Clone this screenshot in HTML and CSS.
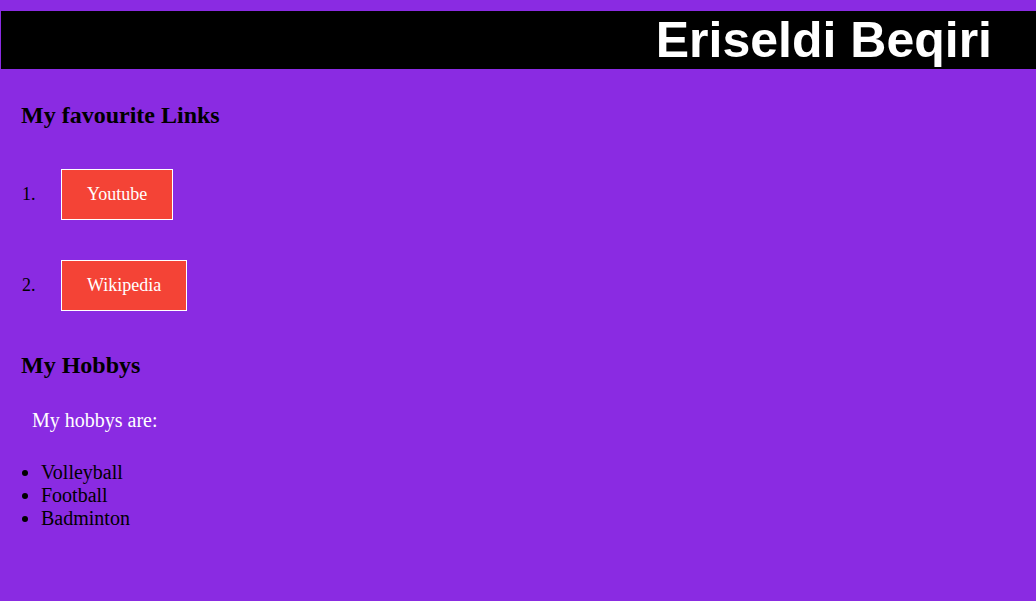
FILE: index.html
```html
<!DOCTYPE html>
<html lang="en">
<head>
<meta charset="utf-8">
<title>Eriseldi Beqiri</title>
<link rel="stylesheet" href="styles.css">
</head>
<body>
  <header class="banner">
    <h1 class="banner-title">Eriseldi Beqiri</h1>
  </header>
  <main class="content">
    <h2 class="section-title">My favourite Links</h2>
    <ol class="link-list">
      <li class="link-item"><a class="link-button" href="#">Youtube</a></li>
      <li class="link-item"><a class="link-button" href="#">Wikipedia</a></li>
    </ol>
    <h2 class="section-title">My Hobbys</h2>
    <p class="hobby-intro">My hobbys are:</p>
    <ul class="hobby-list">
      <li>Volleyball</li>
      <li>Football</li>
      <li>Badminton</li>
    </ul>
  </main>
</body>
</html>
```

FILE: styles.css
```css
html, body {
  margin: 0;
  padding: 0;
}

body {
  background: #8a2be2;
  font-family: "Liberation Serif", "Times New Roman", serif;
  color: #000;
  padding-top: 11px;
  min-height: 590px;
}

.banner {
  background: #000;
  height: 58px;
  margin-left: 1px;
  text-align: right;
  padding-right: 44px;
}

.banner-title {
  margin: 0;
  font-family: "Liberation Sans", Arial, sans-serif;
  font-weight: bold;
  font-size: 50px;
  line-height: 58px;
  color: #fff;
}

.content {
  display: flow-root;
  padding-top: 13px;
}

.section-title {
  font-size: 24px;
  font-weight: bold;
  margin: 20px 0 20px 21px;
  line-height: normal;
}

.link-list {
  margin: 0;
  padding: 0 0 1px 40px;
  font-size: 18px;
}

.link-item {
  padding: 20px 0;
}

.link-button {
  display: inline-block;
  margin-left: 21px;
  padding: 14px 25px;
  background: #f44336;
  border: 1px solid #fff;
  color: #fff;
  text-decoration: none;
  font-size: 18px;
}

.hobby-intro {
  margin: 30px 0 0 32px;
  font-size: 20px;
  line-height: 23px;
  color: #fff;
}

.hobby-list {
  margin: 29px 0 0 0;
  padding-left: 41px;
  font-size: 20px;
  line-height: 23px;
}
```
